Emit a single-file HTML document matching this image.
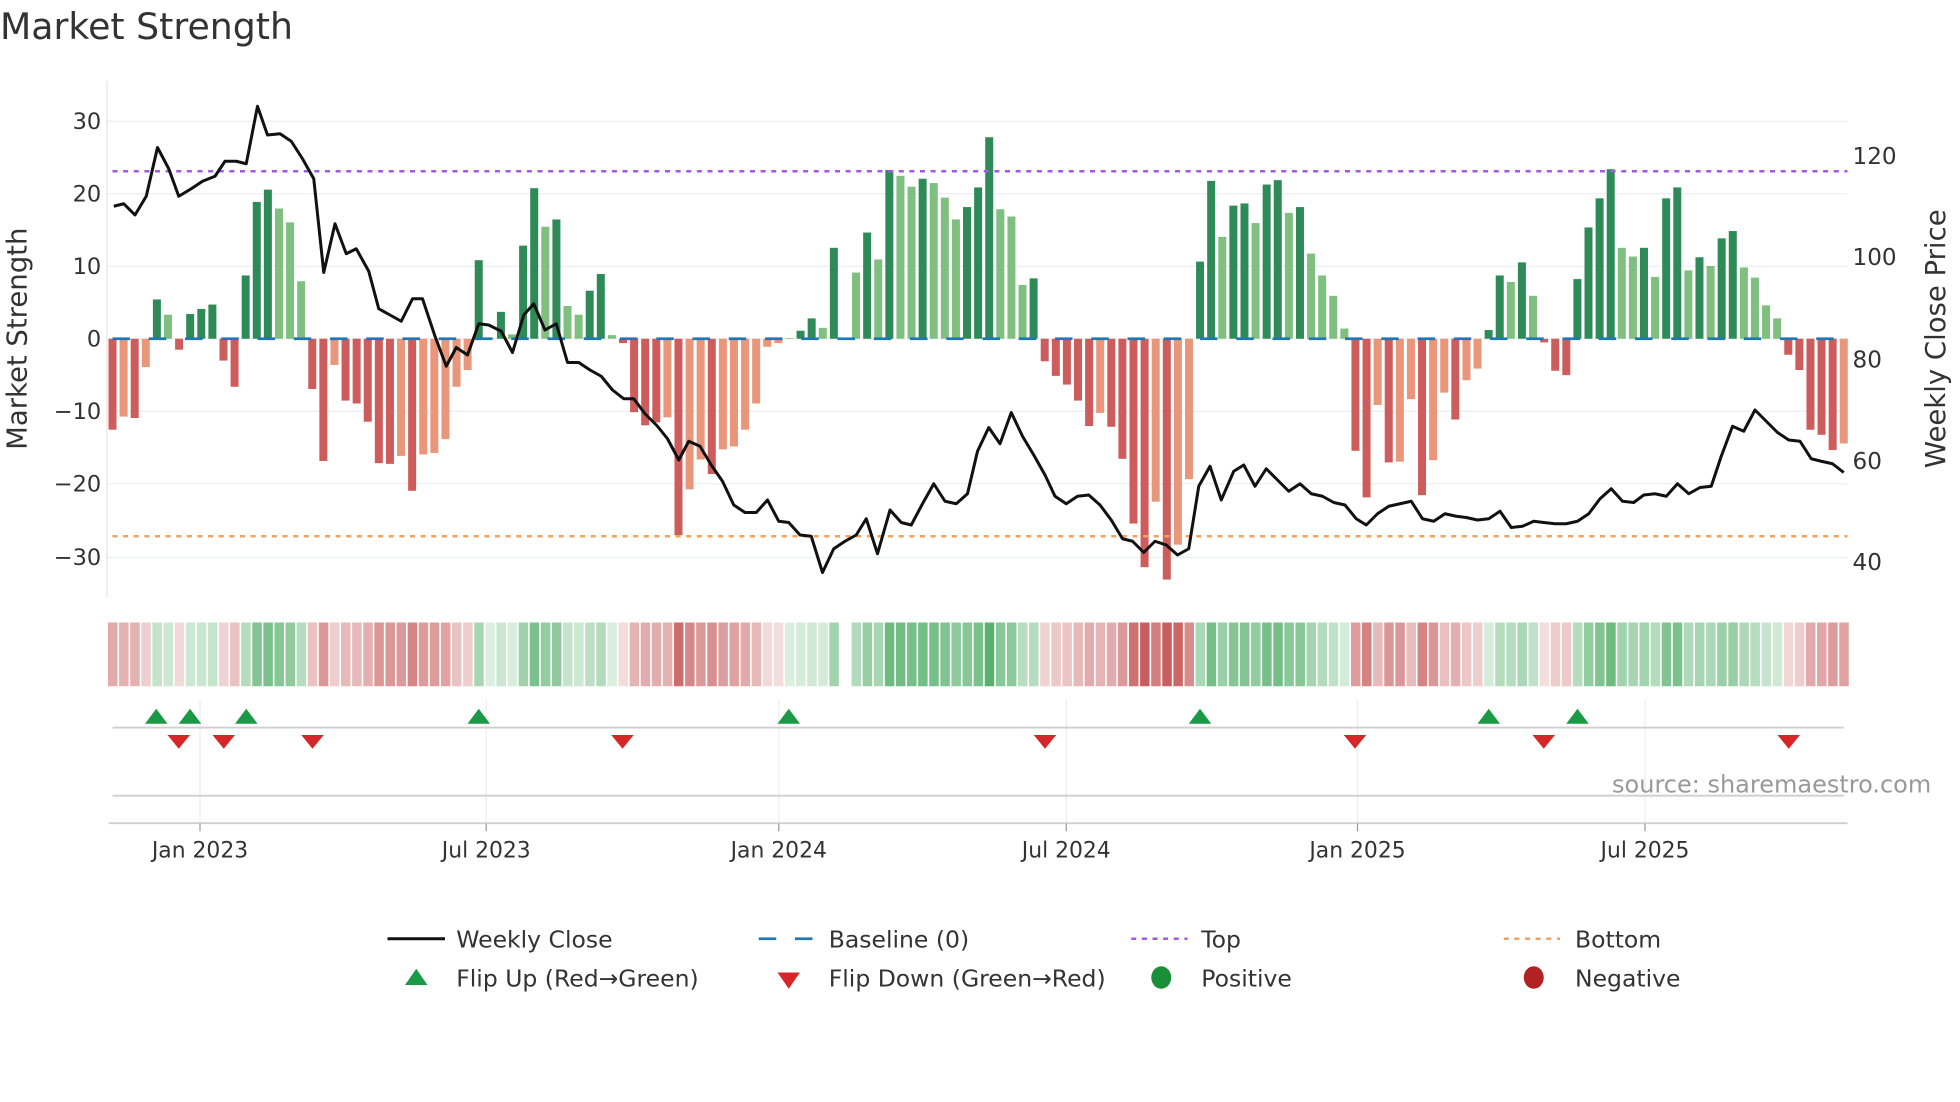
<!DOCTYPE html>
<html><head><meta charset="utf-8">
<style>
html,body{margin:0;padding:0;background:#fff;}
svg{display:block;}
text{font-family:"DejaVu Sans","Liberation Sans",sans-serif;fill:#333;}
</style></head>
<body>
<svg id="s" width="1960" height="1102" viewBox="0 0 1568 881.6" xmlns="http://www.w3.org/2000/svg">
<text x="0" y="31" font-size="29">Market Strength</text>
<g stroke="#eceef3" stroke-width="1">
<line x1="86" y1="97" x2="1478" y2="97"/><line x1="86" y1="155" x2="1478" y2="155"/>
<line x1="86" y1="213" x2="1478" y2="213"/><line x1="86" y1="271" x2="1478" y2="271"/>
<line x1="86" y1="329" x2="1478" y2="329"/><line x1="86" y1="387" x2="1478" y2="387"/>
<line x1="86" y1="446" x2="1478" y2="446"/>
</g>
<line x1="85.5" y1="65" x2="85.5" y2="478" stroke="#e5e5e5"/>
<g font-size="18" text-anchor="end">
<text x="81" y="103">30</text><text x="81" y="161">20</text><text x="81" y="219">10</text>
<text x="81" y="277">0</text><text x="81" y="335">−10</text><text x="81" y="393">−20</text><text x="81" y="452">−30</text>
</g>
<g font-size="18.5">
<text x="1482" y="131">120</text><text x="1482" y="212">100</text><text x="1482" y="294">80</text>
<text x="1482" y="375">60</text><text x="1482" y="456">40</text>
</g>
<text transform="translate(21,271) rotate(-90)" font-size="22" text-anchor="middle">Market Strength</text>
<text transform="translate(1556,271) rotate(-90)" font-size="22" text-anchor="middle">Weekly Close Price</text>
<g id="bars"></g>
<line x1="90" y1="271" x2="1478" y2="271" stroke="#1f77b4" stroke-width="2.2" stroke-dasharray="14 15"/>
<line x1="90" y1="137" x2="1478" y2="137" stroke="#a259e6" stroke-width="2" stroke-dasharray="4 4.5"/>
<line x1="90" y1="429" x2="1478" y2="429" stroke="#f2a25c" stroke-width="2" stroke-dasharray="4 4.5"/>
<polyline id="price" fill="none" stroke="#111" stroke-width="2.4" stroke-linejoin="round"/>
<g id="heat"></g>
<g stroke="#eceef3" stroke-width="1">
<line x1="160" y1="560" x2="160" y2="658"/><line x1="389" y1="560" x2="389" y2="658"/>
<line x1="623" y1="560" x2="623" y2="658"/><line x1="853" y1="560" x2="853" y2="658"/>
<line x1="1086" y1="560" x2="1086" y2="658"/><line x1="1316" y1="560" x2="1316" y2="658"/>
</g>
<line x1="90" y1="582" x2="1475" y2="582" stroke="#cfcfcf" stroke-width="1.5"/>
<line x1="90" y1="636.5" x2="1475" y2="636.5" stroke="#cfcfcf" stroke-width="1.5"/>
<line x1="87" y1="658.5" x2="1478" y2="658.5" stroke="#cfcfcf" stroke-width="1.5"/>
<g stroke="#999" stroke-width="1">
<line x1="160" y1="659" x2="160" y2="665"/><line x1="389" y1="659" x2="389" y2="665"/>
<line x1="623" y1="659" x2="623" y2="665"/><line x1="853" y1="659" x2="853" y2="665"/>
<line x1="1086" y1="659" x2="1086" y2="665"/><line x1="1316" y1="659" x2="1316" y2="665"/>
</g>
<g id="mk"></g>
<g font-size="17.5" text-anchor="middle">
<text x="160" y="686">Jan 2023</text><text x="389" y="686">Jul 2023</text><text x="623" y="686">Jan 2024</text>
<text x="853" y="686">Jul 2024</text><text x="1086" y="686">Jan 2025</text><text x="1316" y="686">Jul 2025</text>
</g>
<text x="1545" y="634" font-size="19.2" text-anchor="end" style="fill:#999">source: sharemaestro.com</text>
<g font-size="18.8">
<line x1="310" y1="751" x2="356" y2="751" stroke="#111" stroke-width="2.4"/>
<text x="365" y="758">Weekly Close</text>
<line x1="607" y1="751" x2="652" y2="751" stroke="#1f77b4" stroke-width="2.2" stroke-dasharray="14 15"/>
<text x="663" y="758">Baseline (0)</text>
<line x1="905" y1="751" x2="950" y2="751" stroke="#a259e6" stroke-width="2" stroke-dasharray="4 4.5"/>
<text x="961" y="758">Top</text>
<line x1="1203" y1="751" x2="1248" y2="751" stroke="#f2a25c" stroke-width="2" stroke-dasharray="4 4.5"/>
<text x="1260" y="758">Bottom</text>
<polygon points="324,788 333,775 342,788" fill="#1a9a45"/>
<text x="365" y="789">Flip Up (Red→Green)</text>
<polygon points="622,778 640,778 631,791" fill="#d62728"/>
<text x="663" y="789">Flip Down (Green→Red)</text>
<ellipse cx="929" cy="782" rx="8" ry="9" fill="#1a8f3a"/>
<text x="961" y="789">Positive</text>
<ellipse cx="1227" cy="782" rx="8" ry="9" fill="#b22222"/>
<text x="1260" y="789">Negative</text>
</g>
</svg>
<script>
var V=[[-12.5,1],[-10.7,0],[-10.9,1],[-3.9,0],[5.4,1],[3.3,0],[-1.5,1],[3.4,1],[4.1,1],[4.7,1],[-3,1],[-6.6,1],[8.7,1],[18.8,1],[20.5,1],[17.9,0],[16,0],[7.9,0],[-6.9,1],[-16.8,1],[-3.6,0],[-8.5,1],[-8.9,1],[-11.4,1],[-17.1,1],[-17.2,1],[-16.1,0],[-20.9,1],[-15.9,0],[-15.7,0],[-13.8,0],[-6.6,0],[-4.3,0],[10.8,1],[0.1,0],[3.7,1],[0.6,0],[12.8,1],[20.7,1],[15.4,0],[16.4,1],[4.5,0],[3.3,0],[6.6,1],[8.9,1],[0.5,0],[-0.6,1],[-10.1,1],[-11.9,1],[-11.5,1],[-10.8,0],[-27,1],[-20.7,0],
[-16.6,0],[-18.6,1],[-15.2,0],[-14.8,0],[-12.5,0],[-8.9,0],[-1.1,0],[-0.6,0],[0.1,0],[1.1,1],[2.8,1],[1.5,0],[12.5,1],[0,0],[9.1,0],[14.6,1],[10.9,0],[23.2,1],[22.4,0],[20.9,0],[22,1],[21.4,0],[19.4,0],[16.4,0],[18.1,1],[20.8,1],[27.7,1],[17.8,0],[16.8,0],[7.4,0],[8.3,1],[-3.1,1],[-5.1,1],[-6.3,1],[-8.5,1],[-12,1],[-10.2,0],[-12.1,1],[-16.5,1],[-25.4,1],[-31.4,1],[-22.4,0],[-33.1,1],[-28.3,0],[-19.3,0],[10.6,1],[21.7,1],[14,0],[18.3,1],[18.6,1],[15.9,0],[21.2,1],[21.8,1],[17.3,0],[18.1,1],[11.7,0],
[8.7,0],[5.9,0],[1.4,0],[-15.4,1],[-21.8,1],[-9.1,0],[-17,1],[-16.9,0],[-8.3,0],[-21.5,1],[-16.7,0],[-7.4,0],[-11.1,1],[-5.7,0],[-4.1,0],[1.2,1],[8.7,1],[7.8,0],[10.5,1],[5.9,0],[-0.5,1],[-4.4,1],[-5,1],[8.2,1],[15.3,1],[19.3,1],[23.3,1],[12.5,0],[11.3,0],[12.5,1],[8.5,0],[19.3,1],[20.8,1],[9.4,0],[11.2,1],[10,0],[13.8,1],[14.8,1],[9.8,0],[8.4,0],[4.6,0],[2.8,0],[-2.2,1],[-4.3,1],[-12.5,1],[-13.2,1],[-15.3,1],[-14.4,0]];
var NS="http://www.w3.org/2000/svg";
function el(t,a,p){var e=document.createElementNS(NS,t);for(var k in a)e.setAttribute(k,a[k]);p.appendChild(e);return e;}
var bars=document.getElementById('bars'),heat=document.getElementById('heat');
var sp=1385/156;
for(var i=0;i<V.length;i++){
 var v=V[i][0],d=V[i][1],x=90+i*sp,h=Math.abs(v)*5.82;
 var c=v>=0?(d?'#2e8b57':'#7fbf7f'):(d?'#cd5c5c':'#e9967a');
 if(h>0.3) el('rect',{x:(x-3.2).toFixed(2),y:(v>=0?271-h:271).toFixed(2),width:6.4,height:h.toFixed(2),fill:c},bars);
 if(v!==0){
  var a=Math.min(1,0.2+0.8*Math.abs(v)/30);
  el('rect',{x:(x-3.6).toFixed(2),y:498,width:7.6,height:51,fill:v>0?'rgb(78,172,100)':'rgb(200,95,95)','fill-opacity':a.toFixed(2)},heat);
 }
}
var P="91,165 99,163 108,172 117,157 126,118 135,135 143,157 153,151 162,145 172,141 180,129 189,129 197,131 206,85 214,108 224,107 233,113 242,127 251,143 259,218 268,179 277,203 285,199 295,217 303,247 312,252 321,257 330,239 338,239 348,269 357,293 365,278 374,284 383,259 391,260 401,265 410,282 419,252 427,243 436,264 445,259 454,290 463,290 472,296 481,301 490,312 499,319 507,319 516,331 526,341 534,351 543,368 551,353 560,357 569,372 578,385 587,404 596,410 605,410 614,400 623,417 631,418 640,428 649,429 658,458 667,439 676,433 685,428 693,415 702,443 712,408 721,418 729,420 738,403 747,387 756,401 765,403 774,395 782,361 791,342 800,355 809,330 818,349 827,364 836,380 844,397 853,403 862,397 871,396 880,404 889,416 898,431 906,433 915,442 924,433 933,436 942,444 951,439 959,389 968,373 977,400 987,377 995,372 1004,389 1013,375 1022,384 1031,393 1040,387 1049,395 1058,397 1067,402 1076,404 1085,415 1093,420 1102,411 1111,405 1120,403 1129,401 1138,415 1147,417 1156,411 1165,413 1173,414 1182,416 1191,415 1200,409 1209,422 1218,421 1227,417 1235,418 1244,419 1253,419 1262,417 1271,411 1280,399 1289,391 1298,401 1307,402 1315,396 1324,395 1333,397 1342,387 1351,395 1360,390 1369,389 1377,365 1386,341 1395,345 1404,328 1413,337 1422,346 1431,352 1440,353 1449,367 1457,369 1466,371 1475,378";
document.getElementById('price').setAttribute('points',P);
var mk=document.getElementById('mk');
[125,152,197,383,631,960,1191,1262].forEach(function(x){el('polygon',{points:(x-9)+',579 '+x+',567 '+(x+9)+',579',fill:'#1a9a45'},mk);});
[143,179,250,498,836,1084,1235,1431].forEach(function(x){el('polygon',{points:(x-9)+',588 '+(x+9)+',588 '+x+',599',fill:'#d62728'},mk);});
</script>
</body></html>
